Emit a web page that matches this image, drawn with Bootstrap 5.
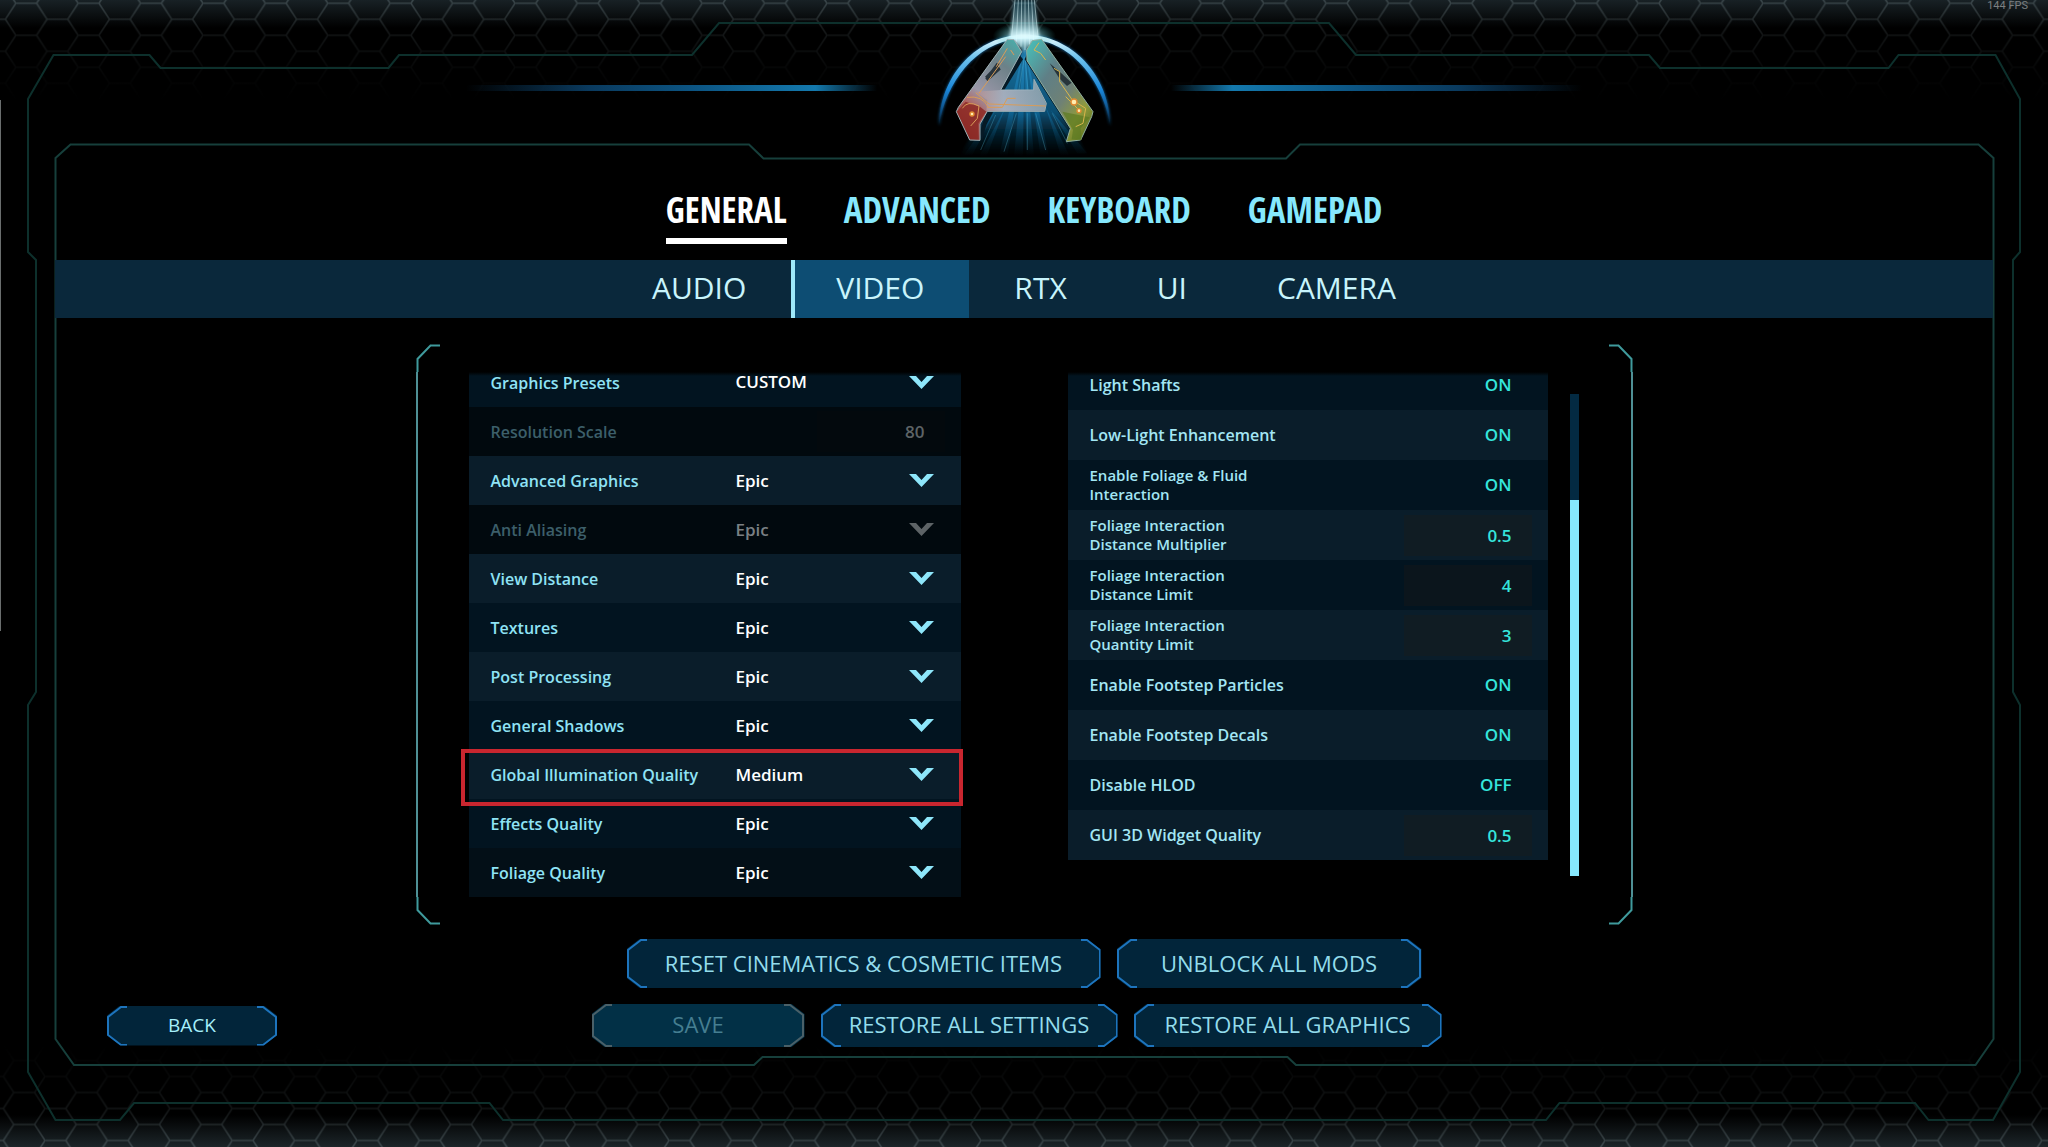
<!DOCTYPE html>
<html lang="en" data-bs-theme="dark">
<head>
<meta charset="utf-8">
<meta name="viewport" content="width=device-width, initial-scale=1">
<title>ARK – Video Settings</title>
<link href="https://cdn.jsdelivr.net/npm/bootstrap@5.3.0/dist/css/bootstrap.min.css" rel="stylesheet">
<style>
  body { background:#000; color:#c8f4fc; font-family:"Open Sans","Noto Sans",sans-serif; }
  .screen { min-height:100vh; overflow:hidden; isolation:isolate; }
  .backdrop { z-index:-1; }
  .fps { top:0; right:20px; font:11px/12px Roboto,sans-serif; color:#7b7f80; }
  .logo { width:250px; height:160px; }

  .main-tabs { gap:57px; margin:24px 0 16px; }
  .main-tabs a { height:60px; border-bottom:6px solid transparent; font-family:"Noto Sans ExtraCondensed","Open Sans Condensed","Roboto Condensed","Liberation Sans Narrow",Roboto,sans-serif; font-weight:700; font-size:35px; line-height:52px; color:#86e8fd; text-align:center; text-decoration:none; }
  .main-tabs a.current { color:#fff; border-color:#fff; }
  .sub-tabs { height:58px; margin:0 55px; background:#0a283b; }
  .sub-tabs a { padding:0 45px; font-size:30px; line-height:56px; color:#c8f4fc; text-decoration:none; }
  .sub-tabs a.current { background:#0d4d73; border-left:4px solid #9ee9fb; padding-left:41px; }

  .settings { width:100%; max-width:1217px; margin-top:26px; padding:28px 54px 28px 53px; }
  .bracket { width:24px; top:0; height:100%; }
  .bracket-l { left:0; }
  .bracket-r { right:0; transform:scaleX(-1); }

  .opt-list { clip-path:inset(0 -12px); }
  .opt-list::before { content:""; position:absolute; inset:0 0 auto 0; height:4px; background:linear-gradient(#000,transparent); z-index:2; }
  .opt-left { flex:492 1 0; margin-right:107px; }
  .opt-right { flex:480 1 0; margin-right:22px; }
  .opt-row { height:49px; padding-left:22px; background:#021420; }
  .opt-row:nth-child(odd) { background:#0a1d2a; }
  .opt-left .opt-row:first-child { height:50px; margin-top:-15px; background:#021420; }
  .opt-left .opt-row.off { background:#01090e; }
  .opt-left .opt-row:last-child { background:#030f17; }
  .opt-right .opt-row { height:50px; background:#021420; }
  .opt-right .opt-row:nth-child(even) { background:#0a1d2a; }
  .opt-right .opt-row:first-child { margin-top:-12px; }
  .opt-row label { width:245px; font-size:16px; line-height:19px; font-weight:600; color:#8fe3f5; }
  .opt-left .opt-row label { padding-top:2px; }
  .opt-right .opt-row label { width:220px; color:#a3e6f4; }
  .opt-right .opt-row label.two { font-size:15px; }
  .opt-row select { appearance:none; background:transparent; border:0; padding:0; color:#fff; font-size:17px; font-weight:600; min-width:0; opacity:1; }
  .opt-row .chev { width:25px; height:13px; margin-right:27px; fill:#8ee6fa; pointer-events:none; }
  .opt-row.off label { color:#3c5f6a; }
  .opt-row.off select { color:#7a8084; }
  .opt-row.off .chev { fill:#5d6366; }
  .num { width:128px; height:41px; margin-right:16px; padding:0 20px 0 0; border:0; text-align:right; font-size:17px; font-weight:600; color:#35e5dc; background:rgba(32,26,20,.3); }
  .opt-row.off .num { color:#5d6366; background:#03090d; opacity:1; }
  .toggle { margin-right:36px; padding:0; border:0; background:none; font-size:17px; font-weight:600; color:#35e5dc; }
  .marked { position:relative; }
  .marked::after { content:""; position:absolute; z-index:1; inset:-1px -2px -7px -8px; border:4px solid #c9262f; pointer-events:none; }
  .track { width:9px; margin:22px 0 21px; background:#032a42; padding-top:106px; }
  .thumb { background:#86e8fd; height:100%; }

  .cut { --x:13px; --y:10px; border:0; padding:0; background:#02253a; color:#93dcec; height:43px; font-size:22px; line-height:41px;
    clip-path:polygon(var(--x) 0,calc(100% - var(--x)) 0,100% var(--y),100% calc(100% - var(--y)),calc(100% - var(--x)) 100%,var(--x) 100%,0 calc(100% - var(--y)),0 var(--y)); }
  .cut svg { width:24px; height:100%; fill:none; stroke:#1d74bd; stroke-width:2; flex:none; }
  .cut svg:last-child { transform:scaleX(-1); }
  .cut-tall { height:49px; line-height:48px; }
  .cut:disabled { background:#023046; color:#457e91; }
  .cut:disabled svg { stroke:#4a6068; }
  .cut-back { width:170px; height:40px; font-size:19px; line-height:38px; color:#a6effb; }
  .w-reset { width:474px; } .w-unblock { width:305px; } .w-save { width:213px; } .w-restore { width:297px; } .w-graphics { width:308px; }
  .bar-top { margin-top:14px; gap:16px; }
  .bar-bottom { margin-top:16px; padding:0 122px 0 107px; display:grid; grid-template-columns:1fr auto 1fr; align-items:center; }
</style>
<script src="https://cdn.jsdelivr.net/npm/bootstrap@5.3.0/dist/js/bootstrap.bundle.min.js"></script>
</head>
<body>
<svg width="0" height="0" class="position-absolute" aria-hidden="true">
  <symbol id="chev" viewBox="0 0 25 13"><path d="M0 0H7L12.500 6L18 0H25L12.500 13Z"/></symbol>
  <symbol id="cap43" viewBox="0 0 24 43"><path d="M20 1H14L1 11V32L14 42H20"/></symbol>
  <symbol id="cap49" viewBox="0 0 24 49"><path d="M20 1H14L1 11V38L14 48H20"/></symbol>
  <symbol id="cap40" viewBox="0 0 24 40"><path d="M20 1H14L1 11V29L14 39H20"/></symbol>
</svg>

<div class="screen position-relative d-flex flex-column">
  <svg class="backdrop position-absolute top-0 start-0 w-100 h-100" viewBox="0 0 2048 1147" preserveAspectRatio="none" aria-hidden="true">
    <defs>
      <pattern id="hexTop" patternUnits="userSpaceOnUse" x="15.800" y="3.300" width="62.400" height="32">
        <path d="M0 0H20.800L31.200 16H52L62.400 0M31.200 16L20.800 32H0M52 16L62.400 32" fill="none" stroke="#8fa3a8" stroke-width="1.600"/>
      </pattern>
      <pattern id="hexBottom" patternUnits="userSpaceOnUse" x="45" y="1140.500" width="62.400" height="32">
        <path d="M0 0H20.800L31.200 16H52L62.400 0M31.200 16L20.800 32H0M52 16L62.400 32" fill="none" stroke="#8fa3a8" stroke-width="1.600"/>
      </pattern>
      <linearGradient id="fadeTop" x1="0" y1="0" x2="0" y2="1"><stop offset="0" stop-color="#fff" stop-opacity=".3"/><stop offset=".35" stop-color="#fff" stop-opacity=".13"/><stop offset=".7" stop-color="#fff" stop-opacity=".04"/><stop offset="1" stop-color="#fff" stop-opacity="0"/></linearGradient>
      <linearGradient id="fadeBottom" x1="0" y1="1" x2="0" y2="0"><stop offset="0" stop-color="#fff" stop-opacity=".3"/><stop offset=".35" stop-color="#fff" stop-opacity=".14"/><stop offset=".7" stop-color="#fff" stop-opacity=".05"/><stop offset="1" stop-color="#fff" stop-opacity="0"/></linearGradient>
      <mask id="mTop"><rect width="2048" height="100" fill="url(#fadeTop)"/></mask>
      <mask id="mBottom"><rect y="1045" width="2048" height="102" fill="url(#fadeBottom)"/></mask>
      <linearGradient id="hazeTop" x1="0" y1="0" x2="0" y2="1"><stop offset="0" stop-color="#182125"/><stop offset="1" stop-color="#000"/></linearGradient>
      <linearGradient id="hazeBottom" x1="0" y1="1" x2="0" y2="0"><stop offset="0" stop-color="#1c2529"/><stop offset="1" stop-color="#000"/></linearGradient>
      <linearGradient id="beam"><stop offset="0" stop-color="#0a3a5e" stop-opacity="0"/><stop offset=".3" stop-color="#0a3a5e"/><stop offset=".55" stop-color="#0c5482"/><stop offset=".85" stop-color="#1479ad"/><stop offset="1" stop-color="#1479ad" stop-opacity="0"/></linearGradient>
    </defs>
    <rect width="2048" height="28" fill="url(#hazeTop)"/>
    <rect y="1115" width="2048" height="32" fill="url(#hazeBottom)"/>
    <rect width="2048" height="100" fill="url(#hexTop)" mask="url(#mTop)"/>
    <rect y="1045" width="2048" height="102" fill="url(#hexBottom)" mask="url(#mBottom)"/>
    <rect y="100" width="1" height="531" fill="#6a6e6e"/>
    <g fill="none" stroke-width="2">
      <path stroke="#0d302c" d="M36 692V260L28 252V99L53.500 55H149.500L160.500 68H388.500L399 55H692L719 23H1329L1356 55H1649L1660 68H1888.500L1898.500 55H1995.500L2020 99V252L2013 260V692L2020 705V1072L1993 1120H1928.500L1915 1103H1559.500L1546 1120H503L489.500 1103H134L120 1120H55.500L28 1072V705L36 692Z"/>
      <path stroke="#163f3b" d="M55.500 158L70.500 144.500H749L763.500 158.500H1286L1300 144.500H1978.500L1993.500 158V1039L1975.500 1065H1296L1287.500 1057H762.500L754 1065H74L55.500 1039Z"/>
    </g>
    <rect x="466" y="85" width="411" height="6" fill="url(#beam)"/>
    <rect x="466" y="85" width="411" height="6" fill="url(#beam)" transform="translate(2048 0) scale(-1 1)"/>
  </svg>

  <div class="fps position-absolute">144 FPS</div>

  <header class="text-center lh-1">
    <svg class="logo" viewBox="0 0 750 480" role="img" aria-label="ARK">
      <defs>
        <linearGradient id="arc" x1="0" y1="0" x2="0" y2="1"><stop offset="0" stop-color="#f2ffff"/><stop offset=".25" stop-color="#6fc3ee"/><stop offset=".6" stop-color="#1a86d8"/><stop offset="1" stop-color="#0b4f91" stop-opacity="0"/></linearGradient>
        <linearGradient id="rays" x1="0" y1="0" x2="0" y2="1"><stop offset="0" stop-color="#2690c8"/><stop offset=".6" stop-color="#0f6a9c" stop-opacity=".85"/><stop offset="1" stop-color="#063349" stop-opacity="0"/></linearGradient>
        <linearGradient id="topbeam" x1="0" y1="0" x2="0" y2="1"><stop offset="0" stop-color="#2d86a4" stop-opacity=".35"/><stop offset=".7" stop-color="#dffcff"/><stop offset="1" stop-color="#8fdcf4" stop-opacity=".5"/></linearGradient>
        <radialGradient id="flare"><stop offset="0" stop-color="#fff"/><stop offset=".4" stop-color="#a8eefa" stop-opacity=".6"/><stop offset="1" stop-color="#2aa" stop-opacity="0"/></radialGradient>
        <linearGradient id="legL" x1=".8" y1="0" x2=".1" y2="1"><stop offset="0" stop-color="#3fb9b4"/><stop offset=".3" stop-color="#6d8188"/><stop offset=".6" stop-color="#9a97a8"/><stop offset=".75" stop-color="#b0605c"/><stop offset="1" stop-color="#7c1f1e"/></linearGradient>
        <linearGradient id="legR" x1="0" y1="0" x2=".9" y2="1"><stop offset="0" stop-color="#46c4bd"/><stop offset=".35" stop-color="#5f7f86"/><stop offset=".6" stop-color="#6f8175"/><stop offset=".8" stop-color="#8f9a3c"/><stop offset="1" stop-color="#59711d"/></linearGradient>
        <linearGradient id="bar"><stop offset="0" stop-color="#b98d8a"/><stop offset=".4" stop-color="#a9b6c6"/><stop offset="1" stop-color="#8aa6b6"/></linearGradient>
        <filter id="soft" x="-50%" y="-50%" width="200%" height="200%"><feGaussianBlur stdDeviation="5"/></filter>
      </defs>
      <path d="M377 140L180 470H570Z" fill="url(#rays)" opacity=".85" filter="url(#soft)"/>
      <path d="M120 378C122 225 235 104 377 104C519 104 632 225 634 378C612 240 515 116 377 116C239 116 142 240 120 378Z" fill="#1a8be0" opacity=".8" filter="url(#soft)"/>
      <path d="M120 378C122 225 235 104 377 104C519 104 632 225 634 378C612 240 515 116 377 116C239 116 142 240 120 378Z" fill="url(#arc)"/>
      <g fill="url(#rays)">
        <path d="M372 150L300 470H325ZM376 150L345 470H372ZM378 150L382 470H405ZM380 150L425 470H450ZM290 330L195 465H220ZM320 320L240 470H262ZM440 320L485 465H510ZM455 330L535 460H565Z" opacity=".8"/>
      </g>
      <g stroke="#5cc4e6" stroke-width="2" opacity=".45"><path d="M376 170L350 330M378 170L392 330M352 340L315 455M385 340V450M410 340L440 450M290 345L245 450M460 340L505 430"/></g>
      <ellipse cx="376" cy="108" rx="95" ry="42" fill="url(#flare)"/>
      <path d="M344 0H408L420 110L376 158L332 110Z" fill="url(#topbeam)" opacity=".85" filter="url(#soft)"/>
      <path d="M348 0L338 110M358 0L352 125M368 0L366 140M378 0V150M388 0L392 135M398 0L404 120M406 0L417 110" stroke="#dffcff" stroke-width="3" opacity=".5"/>
      <path d="M362 165L372 178L316 270H303ZM262 334L282 336L262 375L250 420L242 400ZM385 160L377 178L512 388L500 424L522 384Z" fill="#061a26"/>
      <path d="M325 118L345 119L368 155L305 270H404L405 238L442 310L437 334H265L243 372V421L212 420L172 335L178 322Z" fill="url(#legL)" stroke="#9fb1b5" stroke-width="3" stroke-linejoin="round"/>
      <path d="M230 275L305 270H404L405 240L440 310L437 332H262L265 300Z" fill="url(#bar)" opacity=".75"/>
      <path d="M174 335L200 305L243 320L262 335L238 370L236 418L214 416Z" fill="#8d2a26" opacity=".85"/>
      <path d="M400 122L428 118L582 335L578 350L545 420L502 425L514 385L384 182L383 150Z" fill="url(#legR)" stroke="#8fae9f" stroke-width="3" stroke-linejoin="round"/>
      <path d="M260 232L300 190M262 235L293 193L302 208L266 240Z" fill="#28343c" stroke="#28343c" stroke-width="5"/>
      <path d="M452 190L483 216L518 248L504 258L482 236Z" fill="#27343a"/>
      <path d="M545 385L548 420L518 418L522 390L490 335L572 352Z" fill="#5d7a22" opacity=".7"/>
      <path d="M230 278L270 312L440 318M265 322H310L325 295H350M204 292Q250 285 268 322M190 325Q205 300 240 318L235 355L215 378M325 145L292 200M335 150L345 165M240 280L320 170" fill="none" stroke="#d99c58" stroke-width="3"/>
      <path d="M420 128L405 150L425 160L440 180M465 205L482 215V245L520 300L560 325L552 370L530 380M500 290L540 330" fill="none" stroke="#d9b64c" stroke-width="3"/>
      <g fill="#ffedb0" stroke="#e08a30" stroke-width="4"><circle cx="219" cy="342" r="6"/><circle cx="525" cy="306" r="9"/><circle cx="540" cy="332" r="6"/></g>
    </svg>
  </header>

  <nav class="main-tabs d-flex justify-content-center" aria-label="Settings">
    <a href="#" class="current" aria-current="page">GENERAL</a>
    <a href="#">ADVANCED</a>
    <a href="#">KEYBOARD</a>
    <a href="#">GAMEPAD</a>
  </nav>

  <nav class="sub-tabs d-flex justify-content-center" aria-label="General">
    <a href="#">AUDIO</a>
    <a href="#" class="current" aria-current="page">VIDEO</a>
    <a href="#">RTX</a>
    <a href="#">UI</a>
    <a href="#">CAMERA</a>
  </nav>

  <main class="settings position-relative d-flex align-items-start align-self-center">
    <svg class="bracket bracket-l position-absolute" viewBox="0 0 24 581" preserveAspectRatio="none" fill="none" aria-hidden="true"><path d="M1 28V553" stroke="#4f9095" stroke-width="2"/><path d="M24 1.500H14.500L1.500 15V28M1.500 553V566L14.500 579.500H24" stroke="#3f9a9c" stroke-width="2"/></svg>
    <svg class="bracket bracket-r position-absolute" viewBox="0 0 24 581" preserveAspectRatio="none" fill="none" aria-hidden="true"><path d="M1 28V553" stroke="#4f9095" stroke-width="2"/><path d="M24 1.500H14.500L1.500 15V28M1.500 553V566L14.500 579.500H24" stroke="#3f9a9c" stroke-width="2"/></svg>

    <div class="opt-list opt-left position-relative">
      <div class="opt-row d-flex align-items-center"><label for="preset">Graphics Presets</label><select id="preset" class="flex-fill"><option>CUSTOM</option></select><svg class="chev"><use href="#chev"/></svg></div>
      <div class="opt-row off d-flex align-items-center"><label for="res">Resolution Scale</label><input id="res" class="num ms-auto" type="text" value="80" disabled></div>
      <div class="opt-row d-flex align-items-center"><label for="adv">Advanced Graphics</label><select id="adv" class="flex-fill"><option>Epic</option></select><svg class="chev"><use href="#chev"/></svg></div>
      <div class="opt-row off d-flex align-items-center"><label for="aa">Anti Aliasing</label><select id="aa" class="flex-fill" disabled><option>Epic</option></select><svg class="chev"><use href="#chev"/></svg></div>
      <div class="opt-row d-flex align-items-center"><label for="view">View Distance</label><select id="view" class="flex-fill"><option>Epic</option></select><svg class="chev"><use href="#chev"/></svg></div>
      <div class="opt-row d-flex align-items-center"><label for="tex">Textures</label><select id="tex" class="flex-fill"><option>Epic</option></select><svg class="chev"><use href="#chev"/></svg></div>
      <div class="opt-row d-flex align-items-center"><label for="post">Post Processing</label><select id="post" class="flex-fill"><option>Epic</option></select><svg class="chev"><use href="#chev"/></svg></div>
      <div class="opt-row d-flex align-items-center"><label for="shadow">General Shadows</label><select id="shadow" class="flex-fill"><option>Epic</option></select><svg class="chev"><use href="#chev"/></svg></div>
      <div class="opt-row marked d-flex align-items-center"><label for="gi">Global Illumination Quality</label><select id="gi" class="flex-fill"><option>Medium</option></select><svg class="chev"><use href="#chev"/></svg></div>
      <div class="opt-row d-flex align-items-center"><label for="fx">Effects Quality</label><select id="fx" class="flex-fill"><option>Epic</option></select><svg class="chev"><use href="#chev"/></svg></div>
      <div class="opt-row d-flex align-items-center"><label for="fol">Foliage Quality</label><select id="fol" class="flex-fill"><option>Epic</option></select><svg class="chev"><use href="#chev"/></svg></div>
    </div>

    <div class="opt-list opt-right position-relative">
      <div class="opt-row d-flex align-items-center justify-content-between"><label for="shafts">Light Shafts</label><button id="shafts" type="button" class="toggle">ON</button></div>
      <div class="opt-row d-flex align-items-center justify-content-between"><label for="low">Low-Light Enhancement</label><button id="low" type="button" class="toggle">ON</button></div>
      <div class="opt-row d-flex align-items-center justify-content-between"><label for="fluid" class="two">Enable Foliage &amp; Fluid<br>Interaction</label><button id="fluid" type="button" class="toggle">ON</button></div>
      <div class="opt-row d-flex align-items-center justify-content-between"><label for="mult" class="two">Foliage Interaction<br>Distance Multiplier</label><input id="mult" class="num" type="text" value="0.5"></div>
      <div class="opt-row d-flex align-items-center justify-content-between"><label for="dist" class="two">Foliage Interaction<br>Distance Limit</label><input id="dist" class="num" type="text" value="4"></div>
      <div class="opt-row d-flex align-items-center justify-content-between"><label for="qty" class="two">Foliage Interaction<br>Quantity Limit</label><input id="qty" class="num" type="text" value="3"></div>
      <div class="opt-row d-flex align-items-center justify-content-between"><label for="part">Enable Footstep Particles</label><button id="part" type="button" class="toggle">ON</button></div>
      <div class="opt-row d-flex align-items-center justify-content-between"><label for="decal">Enable Footstep Decals</label><button id="decal" type="button" class="toggle">ON</button></div>
      <div class="opt-row d-flex align-items-center justify-content-between"><label for="hlod">Disable HLOD</label><button id="hlod" type="button" class="toggle">OFF</button></div>
      <div class="opt-row d-flex align-items-center justify-content-between"><label for="gui">GUI 3D Widget Quality</label><input id="gui" class="num" type="text" value="0.5"></div>
    </div>
    <div class="track align-self-stretch"><div class="thumb"></div></div>
  </main>

  <div class="bar-top d-flex justify-content-center">
    <button type="button" class="cut cut-tall w-reset d-flex justify-content-between"><svg><use href="#cap49"/></svg><span>RESET CINEMATICS &amp; COSMETIC ITEMS</span><svg><use href="#cap49"/></svg></button>
    <button type="button" class="cut cut-tall w-unblock d-flex justify-content-between"><svg><use href="#cap49"/></svg><span>UNBLOCK ALL MODS</span><svg><use href="#cap49"/></svg></button>
  </div>
  <div class="bar-bottom">
    <button type="button" class="cut cut-back d-flex justify-content-between"><svg><use href="#cap40"/></svg><span>BACK</span><svg><use href="#cap40"/></svg></button>
    <div class="d-flex gap-3">
      <button type="button" class="cut w-save d-flex justify-content-between" disabled><svg><use href="#cap43"/></svg><span>SAVE</span><svg><use href="#cap43"/></svg></button>
      <button type="button" class="cut w-restore d-flex justify-content-between"><svg><use href="#cap43"/></svg><span>RESTORE ALL SETTINGS</span><svg><use href="#cap43"/></svg></button>
      <button type="button" class="cut w-graphics d-flex justify-content-between"><svg><use href="#cap43"/></svg><span>RESTORE ALL GRAPHICS</span><svg><use href="#cap43"/></svg></button>
    </div>
  </div>
</div>
</body>
</html>
